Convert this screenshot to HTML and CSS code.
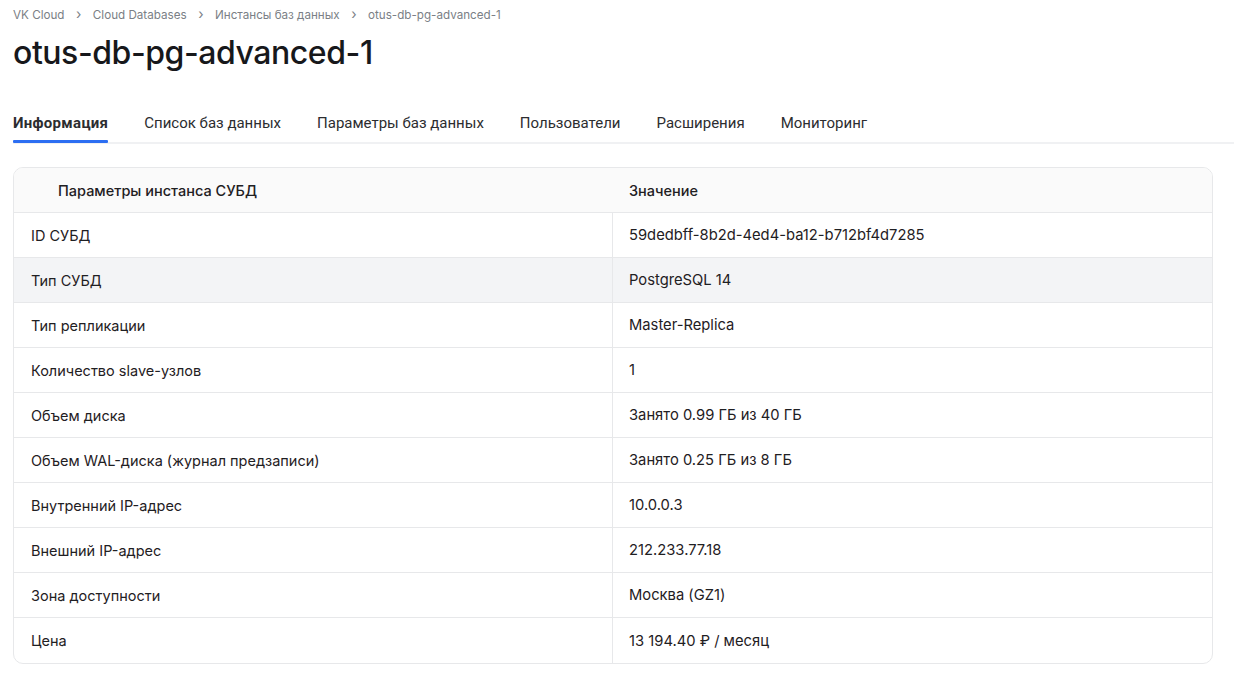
FILE: index.html
```html
<!DOCTYPE html>
<html lang="ru">
<head>
<meta charset="utf-8">
<link rel="stylesheet" href="styles.css">
</head>
<body>
<div class="page">
  <nav class="crumbs">
    <span>VK Cloud</span><span class="sep">›</span>
    <span>Cloud Databases</span><span class="sep">›</span>
    <span>Инстансы баз данных</span><span class="sep">›</span>
    <span>otus-db-pg-advanced-1</span>
  </nav>
  <h1 class="title">otus-db-pg-advanced-1</h1>
  <div class="tabs">
    <div class="tab active">Информация</div>
    <div class="tab">Список баз данных</div>
    <div class="tab">Параметры баз данных</div>
    <div class="tab">Пользователи</div>
    <div class="tab">Расширения</div>
    <div class="tab">Мониторинг</div>
  </div>
  <div class="table">
    <div class="row head">
      <div class="cell c1">Параметры инстанса СУБД</div>
      <div class="cell c2">Значение</div>
    </div>
    <div class="row"><div class="cell c1">ID СУБД</div><div class="cell c2">59dedbff-8b2d-4ed4-ba12-b712bf4d7285</div></div>
    <div class="row hover"><div class="cell c1">Тип СУБД</div><div class="cell c2">PostgreSQL 14</div></div>
    <div class="row"><div class="cell c1">Тип репликации</div><div class="cell c2">Master-Replica</div></div>
    <div class="row"><div class="cell c1">Количество slave-узлов</div><div class="cell c2">1</div></div>
    <div class="row"><div class="cell c1">Объем диска</div><div class="cell c2">Занято 0.99 ГБ из 40 ГБ</div></div>
    <div class="row"><div class="cell c1">Объем WAL-диска (журнал предзаписи)</div><div class="cell c2">Занято 0.25 ГБ из 8 ГБ</div></div>
    <div class="row"><div class="cell c1">Внутренний IP-адрес</div><div class="cell c2">10.0.0.3</div></div>
    <div class="row"><div class="cell c1">Внешний IP-адрес</div><div class="cell c2">212.233.77.18</div></div>
    <div class="row"><div class="cell c1">Зона доступности</div><div class="cell c2">Москва (GZ1)</div></div>
    <div class="row last"><div class="cell c1">Цена</div><div class="cell c2">13 194.40 ₽ / месяц</div></div>
  </div>
</div>
</body>
</html>
```

FILE: styles.css
```css
* { box-sizing: border-box; }
html, body { margin: 0; padding: 0; background: #fff; }
body { font-family: Inter, "Noto Sans", sans-serif; color: #1f2023; }
.page { padding: 6px 21px 0 13px; }
.crumbs {
  display: flex; align-items: center;
  font-size: 11.65px; color: #7b7f86; height: 18px;
}
.crumbs .sep { margin: 0 11.5px; font-size: 14px; color: #7b7f86; line-height: 1; position: relative; top: -1px; }
.title {
  margin: 9px 0 0; font-size: 32px; font-weight: 500; line-height: 40px;
  color: #17181b; letter-spacing: -0.45px;
}
.tabs {
  display: flex; gap: 36px; margin: 35px -21px 0 0;
  border-bottom: 2px solid #f0f1f3; height: 36px;
}
.tab {
  font-family: Roboto, "Noto Sans", sans-serif; font-size: 15px; color: #2c2d30;
  line-height: 18px; padding-top: 6px; position: relative;
}
.tab.active { font-weight: 700; color: #2c2d30; letter-spacing: 0.3px; }
.tab.active::after {
  content: ""; position: absolute; left: 0; right: 0; bottom: -1px; height: 3px;
  background: #2c6ef2; border-radius: 1px;
}
.table {
  margin-top: 23px; border: 1px solid #e7e8ea; border-radius: 10px; overflow: hidden;
}
.row { display: flex; height: 45px; border-bottom: 1px solid #e7e8ea; }
.row.last { border-bottom: none; height: 45px; }
.row.head { background: #fafafa; height: 45px; }
.row.hover { background: #f3f4f6; }
.cell { display: flex; align-items: center; font-size: 14.5px; color: #1f2023; }
.c1 { width: 599px; padding-left: 17px; border-right: 1px solid #e7e8ea; }
.c2 { flex: 1; padding-left: 16px; font-size: 14.75px; }
.head .c1 { border-right: none; padding-left: 44px; }
.head .cell { font-weight: 500; font-size: 14.5px; color: #1f2023; }
.head .c2 { padding-top: 0; }
```
